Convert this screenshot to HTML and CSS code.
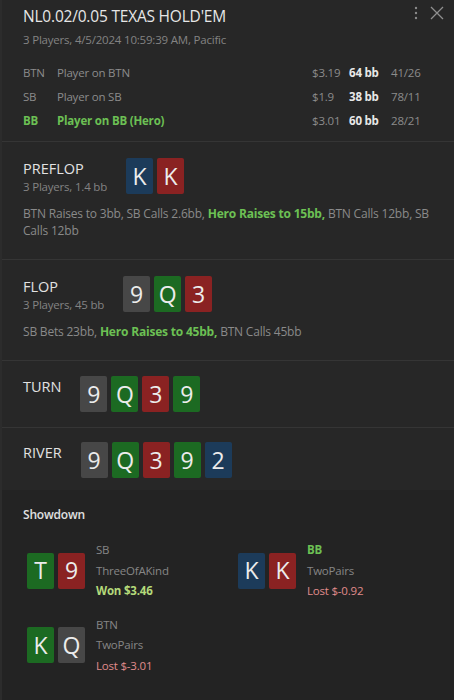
FILE: index.html
```html
<!DOCTYPE html>
<html lang="en">

<head>
    <meta charset="UTF-8">
    <meta name="viewport" content="width=device-width, initial-scale=1.0">
    <title>Hand History</title>
    <link rel="stylesheet" href="styles.css">
</head>

<body>

    <div class="panel">
        <!-- Hand header -->
        <header class="hand-head">
            <div class="title-row">
                <h1>NL0.02/0.05 TEXAS HOLD'EM</h1>
                <div class="tools">
                    <svg class="kebab" width="4" height="14" viewBox="0 0 4 14">
                        <circle cx="2" cy="2" r="1.2" fill="#8a8a8a" />
                        <circle cx="2" cy="7" r="1.2" fill="#8a8a8a" />
                        <circle cx="2" cy="12" r="1.2" fill="#8a8a8a" />
                    </svg>
                    <svg class="close" width="14" height="14" viewBox="0 0 14 14">
                        <path d="M1 1 L13 13 M13 1 L1 13" stroke="#8f8f8f" stroke-width="1.3" fill="none" />
                    </svg>
                </div>
            </div>
            <div class="sub">3 Players, 4/5/2024 10:59:39 AM, Pacific</div>

            <div class="players">
                <div class="player">
                    <span class="pos">BTN</span>
                    <span class="pname">Player on BTN</span>
                    <span class="money">$3.19</span>
                    <span class="stack">64 bb</span>
                    <span class="stats">41/26</span>
                </div>
                <div class="player">
                    <span class="pos">SB</span>
                    <span class="pname">Player on SB</span>
                    <span class="money">$1.9</span>
                    <span class="stack">38 bb</span>
                    <span class="stats">78/11</span>
                </div>
                <div class="player hero">
                    <span class="pos">BB</span>
                    <span class="pname">Player on BB (Hero)</span>
                    <span class="money">$3.01</span>
                    <span class="stack">60 bb</span>
                    <span class="stats">28/21</span>
                </div>
            </div>
        </header>

        <!-- Preflop -->
        <section class="street">
            <div class="street-top">
                <div class="street-name">
                    <div class="name">PREFLOP</div>
                    <div class="sub">3 Players, 1.4 bb</div>
                </div>
                <div class="cards">
                    <span class="card blue">K</span>
                    <span class="card red">K</span>
                </div>
            </div>
            <p class="actions">BTN Raises to 3bb, SB Calls 2.6bb, <b class="hero-act">Hero Raises to 15bb,</b> BTN Calls 12bb, SB Calls 12bb</p>
        </section>

        <!-- Flop -->
        <section class="street">
            <div class="street-top">
                <div class="street-name">
                    <div class="name">FLOP</div>
                    <div class="sub">3 Players, 45 bb</div>
                </div>
                <div class="cards">
                    <span class="card grey">9</span>
                    <span class="card green">Q</span>
                    <span class="card red">3</span>
                </div>
            </div>
            <p class="actions">SB Bets 23bb, <b class="hero-act">Hero Raises to 45bb,</b> BTN Calls 45bb</p>
        </section>

        <!-- Turn -->
        <section class="street short">
            <div class="street-top">
                <div class="street-name">
                    <div class="name">TURN</div>
                </div>
                <div class="cards">
                    <span class="card grey">9</span>
                    <span class="card green">Q</span>
                    <span class="card red">3</span>
                    <span class="card green">9</span>
                </div>
            </div>
        </section>

        <!-- River -->
        <section class="street short last">
            <div class="street-top">
                <div class="street-name">
                    <div class="name">RIVER</div>
                </div>
                <div class="cards">
                    <span class="card grey">9</span>
                    <span class="card green">Q</span>
                    <span class="card red">3</span>
                    <span class="card green">9</span>
                    <span class="card blue">2</span>
                </div>
            </div>
        </section>

        <!-- Showdown -->
        <section class="showdown">
            <h2>Showdown</h2>
            <div class="sd-grid">
                <div class="sd-hand">
                    <div class="cards">
                        <span class="card green">T</span>
                        <span class="card red">9</span>
                    </div>
                    <div class="sd-info">
                        <div class="sd-pos">SB</div>
                        <div class="sd-rank">ThreeOfAKind</div>
                        <div class="won">Won $3.46</div>
                    </div>
                </div>
                <div class="sd-hand">
                    <div class="cards">
                        <span class="card blue">K</span>
                        <span class="card red">K</span>
                    </div>
                    <div class="sd-info">
                        <div class="sd-pos hero-pos">BB</div>
                        <div class="sd-rank">TwoPairs</div>
                        <div class="lost">Lost $-0.92</div>
                    </div>
                </div>
                <div class="sd-hand">
                    <div class="cards">
                        <span class="card green">K</span>
                        <span class="card grey">Q</span>
                    </div>
                    <div class="sd-info">
                        <div class="sd-pos">BTN</div>
                        <div class="sd-rank">TwoPairs</div>
                        <div class="lost">Lost $-3.01</div>
                    </div>
                </div>
            </div>
        </section>
    </div>

</body>

</html>
```

FILE: styles.css
```css
body {
    margin: 0;
    padding: 0;
    background-color: #242424;
    color: #d6d6d6;
    font-family: 'Open Sans', 'Noto Sans', sans-serif;
}

.panel {
    display: flex;
    flex-direction: column;
    width: 454px;
    height: 700px;
    overflow: hidden;
    background-color: #272727;
    border-left: 2px solid #2c2c2c;
    box-sizing: border-box;
}

/* Header */
.hand-head {
    padding: 4px 10px 9px 21px;
    border-bottom: 1px solid #353535;
}

.title-row {
    display: flex;
    justify-content: space-between;
    align-items: flex-start;
}

h1 {
    margin: 0;
    font-size: 15.5px;
    font-weight: 400;
    color: #e6e6e6;
    line-height: 24px;
    letter-spacing: -0.2px;
}

.tools {
    display: flex;
    align-items: center;
    gap: 12px;
    padding-top: 2px;
}

.sub {
    font-size: 11.5px;
    color: #838383;
    line-height: 16px;
    letter-spacing: -0.2px;
}

.hand-head > .sub {
    margin-top: 4px;
}

.players {
    margin-top: 12px;
}

.player {
    display: flex;
    align-items: center;
    height: 24px;
    font-size: 11.5px;
    color: #8c8c8c;
    letter-spacing: -0.2px;
}

.player .pos {
    width: 34px;
}

.player .pname {
    flex: 1;
}

.player .money {
    width: 37px;
}

.player .stack {
    width: 42px;
    font-weight: 700;
    color: #e8e8e8;
}

.player .stats {
    width: 53px;
}

.player.hero .pos,
.player.hero .pname {
    color: #6cc054;
    font-weight: 700;
}

/* Streets */
.street {
    padding: 16px 22px 20px 21px;
    border-bottom: 1px solid #353535;
}

.street.short {
    padding: 15px 22px 15px 21px;
}

.street.last {
    padding-top: 14px;
    padding-bottom: 12px;
    border-bottom: none;
}

.street-top {
    display: flex;
    align-items: flex-start;
    gap: 19px;
}

.street-name .name {
    font-size: 14.5px;
    color: #e2e2e2;
    line-height: 20px;
    margin-top: 1px;
}

.cards {
    display: flex;
    gap: 4px;
}

.card {
    display: flex;
    align-items: center;
    justify-content: center;
    width: 27px;
    height: 36px;
    border-radius: 2px;
    font-size: 23px;
    color: #ececec;
    line-height: 1;
}

.card.blue {
    background-color: #1c3b5a;
}

.card.red {
    background-color: #8a2222;
}

.card.green {
    background-color: #1c6a22;
}

.card.grey {
    background-color: #474747;
}

.actions {
    margin: 10px 0 0;
    font-size: 12px;
    line-height: 17px;
    color: #8a8a8a;
    letter-spacing: -0.2px;
}

.hero-act {
    color: #6cc054;
}

/* Showdown */
.showdown {
    flex: 1;
    padding: 16px 10px 20px 21px;
    background-color: #232323;
}

h2 {
    margin: 0;
    font-size: 12px;
    font-weight: 600;
    color: #e0e0e0;
    letter-spacing: -0.2px;
}

.sd-grid {
    display: grid;
    grid-template-columns: 211px 1fr;
    row-gap: 13px;
    margin-top: 17px;
    padding-left: 4px;
}

.sd-hand {
    display: flex;
    align-items: center;
    gap: 11px;
}

.sd-info {
    font-size: 11.5px;
    line-height: 20.5px;
    color: #868686;
    letter-spacing: -0.2px;
}

.sd-pos.hero-pos {
    color: #6cc054;
    font-weight: 700;
}

.won {
    color: #b4d97a;
    font-weight: 700;
}

.lost {
    color: #e08c8c;
}
```
